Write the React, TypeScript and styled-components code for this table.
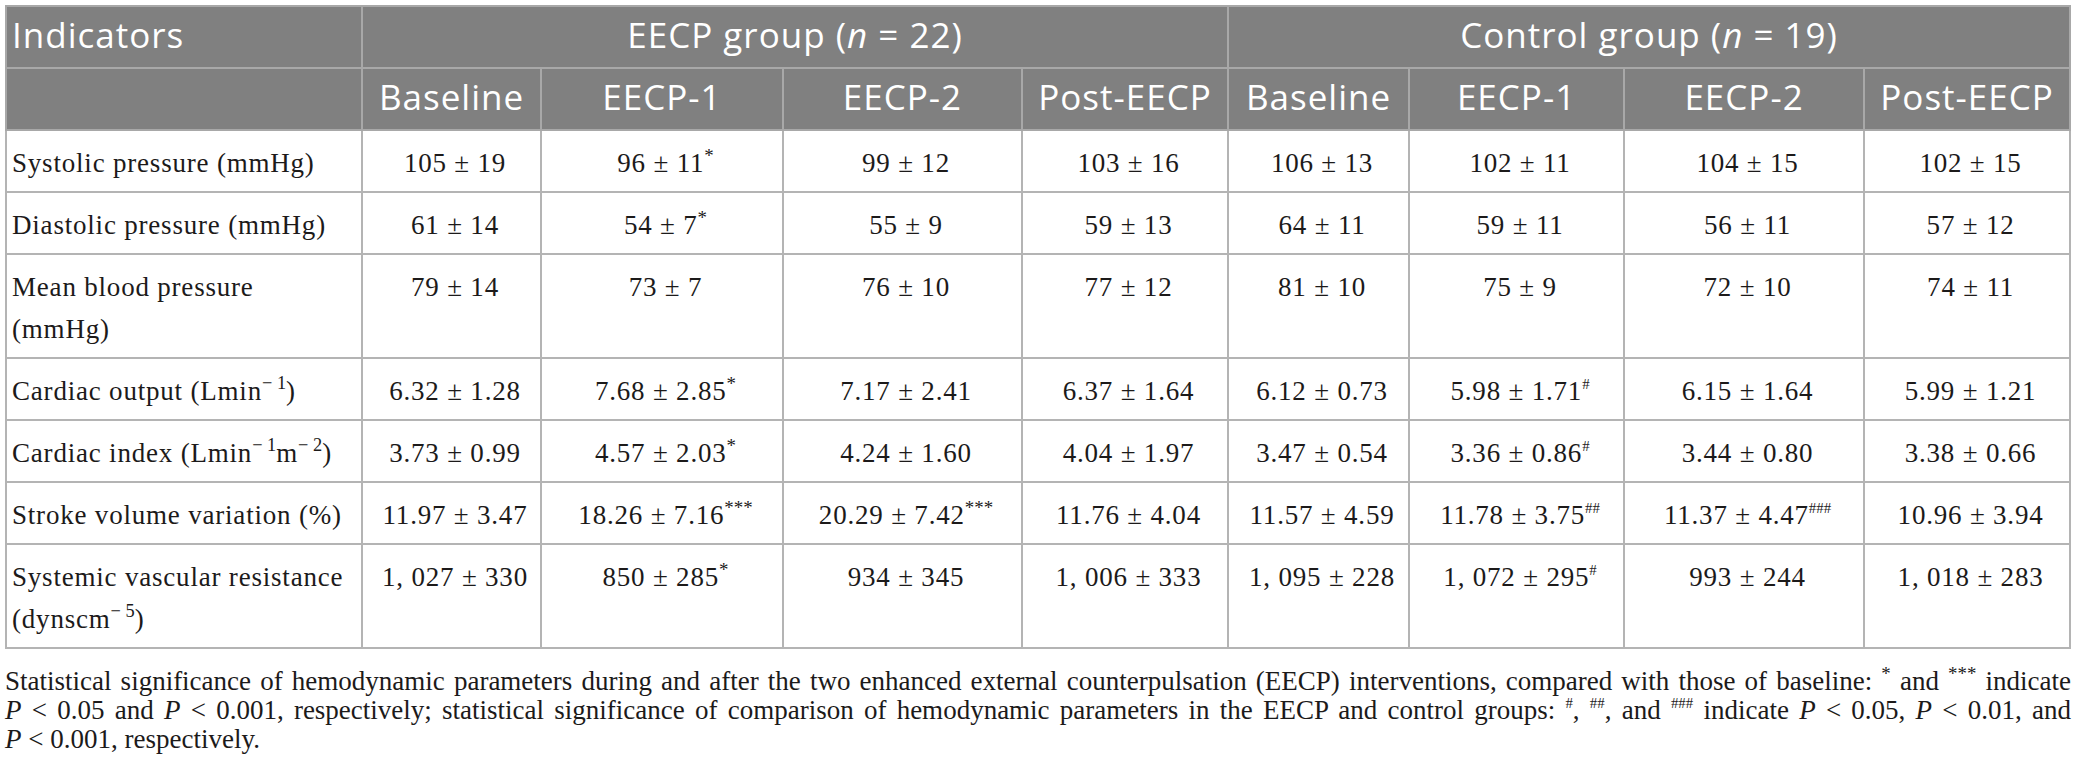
import React from "react";
import styled, { createGlobalStyle } from "styled-components";

const GlobalStyle = createGlobalStyle`
  html, body {
    margin: 0;
    padding: 0;
    background: #ffffff;
  }
  body {
    padding: 5px 5px 0 5px;
  }
`;

const Page = styled.div`
  width: 2066px;
  display: flex;
  flex-direction: column;
`;
const Table = styled.table`
  width: 2066px;
  border-collapse: collapse;
  table-layout: fixed;
  border: 2px solid #b4b4b4;
`;
const HeadCell = styled.th<{ $align?: string }>`
  background: #808080;
  color: #ffffff;
  font-family: "Open Sans", sans-serif;
  font-weight: 400;
  font-size: 35px;
  letter-spacing: 1px;
  line-height: 42px;
  padding: 7px 5px 11px;
  border: 2px solid #a8a8a8;
  text-align: ${(p) => p.$align || "center"};
  white-space: nowrap;
  i {
    font-style: italic;
  }
`;
const BodyCell = styled.td`
  font-family: "Liberation Serif", "Times New Roman", serif;
  font-size: 27px;
  letter-spacing: 0.8px;
  line-height: 42px;
  color: #1c1a1a;
  padding: 11px 5px 7px;
  border: 2px solid #b4b4b4;
  vertical-align: top;
  white-space: nowrap;
`;
const LabelCell = styled(BodyCell)`
  text-align: left;
`;
const ValueCell = styled(BodyCell)`
  text-align: center;
  padding-left: 12px;
`;
const Sup = styled.sup`
  font-size: 0.68em;
  line-height: 0;
  vertical-align: 0.6em;
  letter-spacing: 0;
`;
const Mark = styled.sup<{ $hash?: boolean }>`
  font-size: ${(p) => (p.$hash ? "0.55em" : "0.7em")};
  line-height: 0;
  vertical-align: ${(p) => (p.$hash ? "0.75em" : "0.55em")};
  letter-spacing: 0;
`;
const Note = styled.div`
  margin-top: 18px;
  font-family: "Liberation Serif", "Times New Roman", serif;
  font-size: 27px;
  line-height: 29px;
  color: #1c1a1a;
`;
const NoteLine = styled.div`
  text-align: justify;
  text-align-last: justify;
`;
const LastLine = styled.div`
  text-align: left;
`;

interface ICell {
  v: string;
  sup?: string;
}
interface IRow {
  label: React.ReactNode;
  values: ICell[];
}

const c = (v: string, sup?: string): ICell => ({ v, sup });

const widths = [356, 179, 242, 239, 206, 181, 215, 240, 206];
const subHeads = ["Baseline", "EECP-1", "EECP-2", "Post-EECP"];

const rows: IRow[] = [
  {
    label: "Systolic pressure (mmHg)",
    values: [c("105 ± 19"), c("96 ± 11", "*"), c("99 ± 12"), c("103 ± 16"), c("106 ± 13"), c("102 ± 11"), c("104 ± 15"), c("102 ± 15")],
  },
  {
    label: "Diastolic pressure (mmHg)",
    values: [c("61 ± 14"), c("54 ± 7", "*"), c("55 ± 9"), c("59 ± 13"), c("64 ± 11"), c("59 ± 11"), c("56 ± 11"), c("57 ± 12")],
  },
  {
    label: (
      <>
        Mean blood pressure
        <br />
        (mmHg)
      </>
    ),
    values: [c("79 ± 14"), c("73 ± 7"), c("76 ± 10"), c("77 ± 12"), c("81 ± 10"), c("75 ± 9"), c("72 ± 10"), c("74 ± 11")],
  },
  {
    label: (
      <>
        Cardiac output (Lmin<Sup>− 1</Sup>)
      </>
    ),
    values: [c("6.32 ± 1.28"), c("7.68 ± 2.85", "*"), c("7.17 ± 2.41"), c("6.37 ± 1.64"), c("6.12 ± 0.73"), c("5.98 ± 1.71", "#"), c("6.15 ± 1.64"), c("5.99 ± 1.21")],
  },
  {
    label: (
      <>
        Cardiac index (Lmin<Sup>− 1</Sup>m<Sup>− 2</Sup>)
      </>
    ),
    values: [c("3.73 ± 0.99"), c("4.57 ± 2.03", "*"), c("4.24 ± 1.60"), c("4.04 ± 1.97"), c("3.47 ± 0.54"), c("3.36 ± 0.86", "#"), c("3.44 ± 0.80"), c("3.38 ± 0.66")],
  },
  {
    label: "Stroke volume variation (%)",
    values: [c("11.97 ± 3.47"), c("18.26 ± 7.16", "***"), c("20.29 ± 7.42", "***"), c("11.76 ± 4.04"), c("11.57 ± 4.59"), c("11.78 ± 3.75", "##"), c("11.37 ± 4.47", "###"), c("10.96 ± 3.94")],
  },
  {
    label: (
      <>
        Systemic vascular resistance
        <br />
        (dynscm<Sup>− 5</Sup>)
      </>
    ),
    values: [c("1, 027 ± 330"), c("850 ± 285", "*"), c("934 ± 345"), c("1, 006 ± 333"), c("1, 095 ± 228"), c("1, 072 ± 295", "#"), c("993 ± 244"), c("1, 018 ± 283")],
  },
];

function App() {
  return (
    <>
      <GlobalStyle />
      <Page>
        <Table>
          <colgroup>
            {widths.map((w, i) => (
              <col key={i} style={{ width: w }} />
            ))}
          </colgroup>
          <thead>
            <tr>
              <HeadCell $align="left">Indicators</HeadCell>
              <HeadCell colSpan={4}>
                EECP group (<i>n</i> = 22)
              </HeadCell>
              <HeadCell colSpan={4}>
                Control group (<i>n</i> = 19)
              </HeadCell>
            </tr>
            <tr>
              <HeadCell />
              {[...subHeads, ...subHeads].map((h, i) => (
                <HeadCell key={i}>{h}</HeadCell>
              ))}
            </tr>
          </thead>
          <tbody>
            {rows.map((r, i) => (
              <tr key={i}>
                <LabelCell>{r.label}</LabelCell>
                {r.values.map((cell, j) => (
                  <ValueCell key={j}>
                    {cell.v}
                    {cell.sup && <Mark $hash={cell.sup.startsWith("#")}>{cell.sup}</Mark>}
                  </ValueCell>
                ))}
              </tr>
            ))}
          </tbody>
        </Table>
        <Note>
          <NoteLine>
            Statistical significance of hemodynamic parameters during and after the two enhanced external
            counterpulsation (EECP) interventions, compared with those of baseline: <Mark>*</Mark> and{" "}
            <Mark>***</Mark> indicate
          </NoteLine>
          <NoteLine>
            <i>P</i> &lt; 0.05 and <i>P</i> &lt; 0.001, respectively; statistical significance of comparison of
            hemodynamic parameters in the EECP and control groups: <Mark $hash>#</Mark>, <Mark $hash>##</Mark>, and{" "}
            <Mark $hash>###</Mark> indicate <i>P</i> &lt; 0.05, <i>P</i> &lt; 0.01, and
          </NoteLine>
          <LastLine>
            <i>P</i> &lt; 0.001, respectively.
          </LastLine>
        </Note>
      </Page>
    </>
  );
}
export default App;
